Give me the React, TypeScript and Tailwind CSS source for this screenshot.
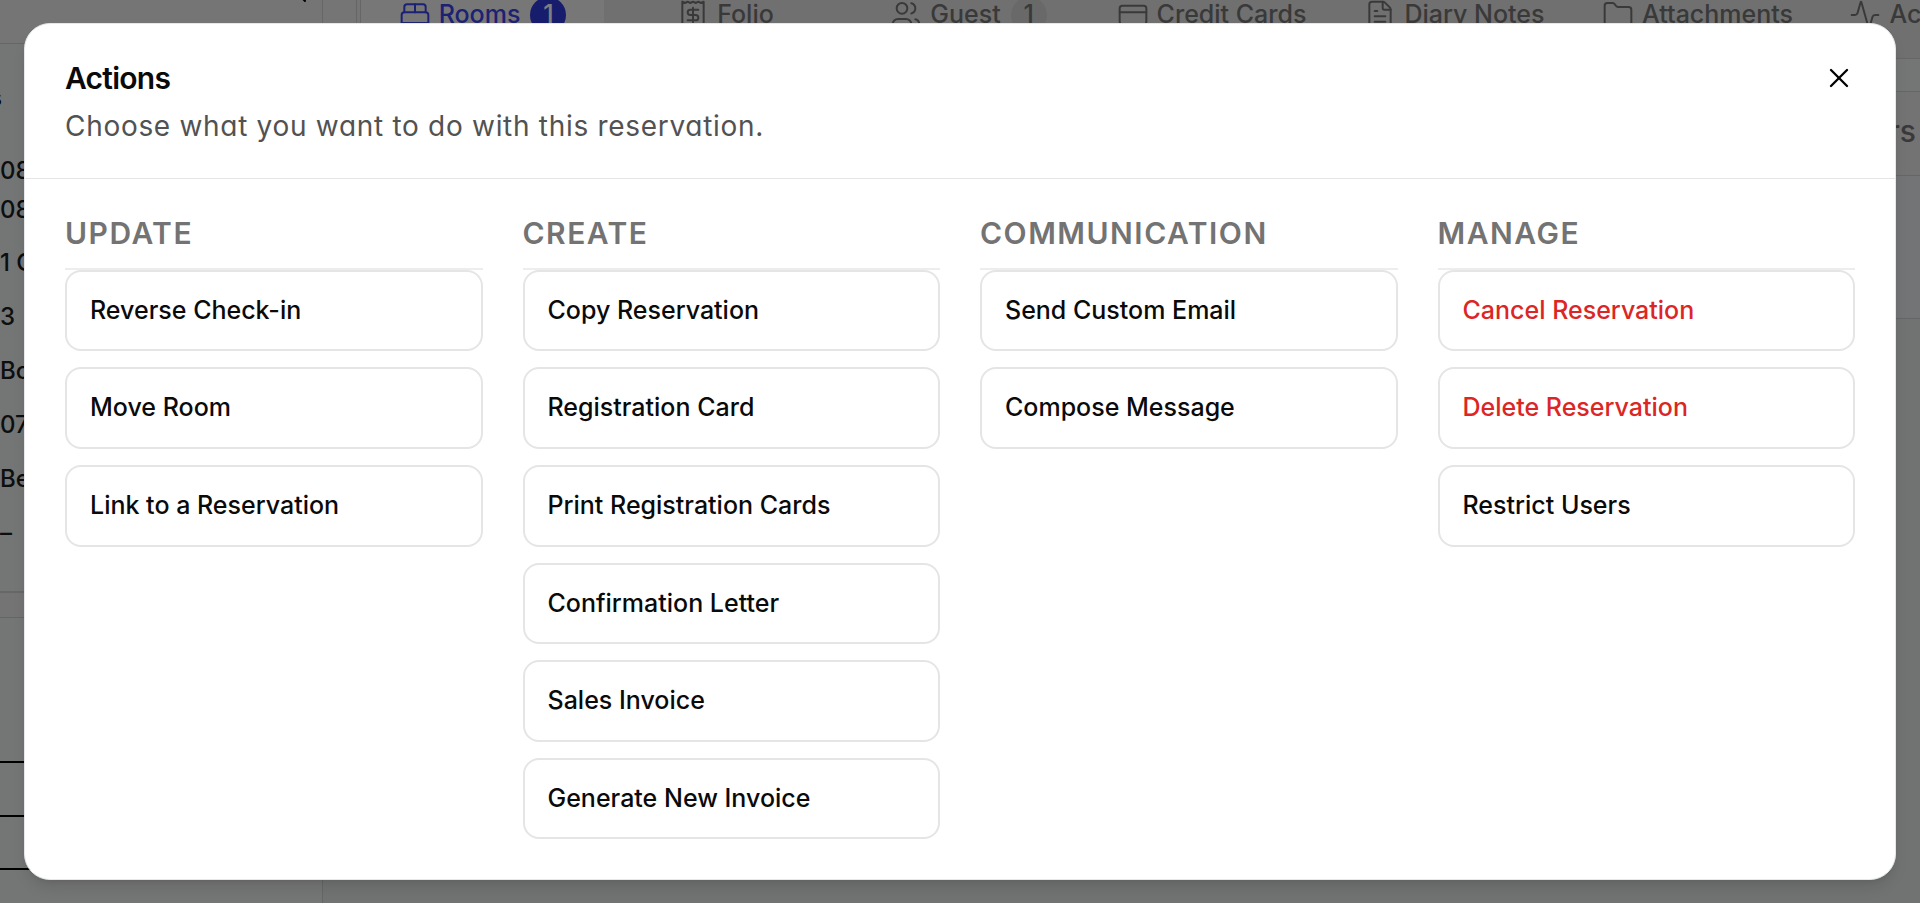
import clsx from "clsx";
import {
  Activity,
  BedDouble,
  CreditCard,
  FileText,
  Folder,
  Receipt,
  Search,
  Users,
  X,
} from "lucide-react";

const tabs = [
  { label: "Rooms", icon: BedDouble, count: 1, active: true },
  { label: "Folio", icon: Receipt },
  { label: "Guest", icon: Users, count: 1 },
  { label: "Credit Cards", icon: CreditCard },
  { label: "Diary Notes", icon: FileText },
  { label: "Attachments", icon: Folder },
  { label: "Activity Log", icon: Activity },
];

const details = ["1 C", "3", "Bo", "07", "Be", "–"];

const groups = [
  {
    title: "Update",
    actions: [
      { label: "Reverse Check-in" },
      { label: "Move Room" },
      { label: "Link to a Reservation" },
    ],
  },
  {
    title: "Create",
    actions: [
      { label: "Copy Reservation" },
      { label: "Registration Card" },
      { label: "Print Registration Cards" },
      { label: "Confirmation Letter" },
      { label: "Sales Invoice" },
      { label: "Generate New Invoice" },
    ],
  },
  {
    title: "Communication",
    actions: [{ label: "Send Custom Email" }, { label: "Compose Message" }],
  },
  {
    title: "Manage",
    actions: [
      { label: "Cancel Reservation", danger: true },
      { label: "Delete Reservation", danger: true },
      { label: "Restrict Users" },
    ],
  },
];

const Sidebar = () => {
  return (
    <aside className="flex w-[323px] shrink-0 flex-col border-r border-[#cccccc] text-2xl font-medium text-[#1a1d21]">
      <div className="flex h-11 shrink-0 justify-end border-b border-[#cccccc] bg-[#ebebeb] pr-3.5">
        <Search className="-mt-5 size-6 text-black" />
      </div>
      <div className="border-b-2 border-[#cccecc] pb-[31px]">
        <div className="flex h-[108px] w-0.5 items-center justify-end font-semibold text-black">
          Details
        </div>
        <p className="h-[38px] leading-[38px]">08</p>
        <p className="mb-1.5 h-10 leading-10">08</p>
        {details.map((item) => (
          <p key={item} className="h-[54px] leading-[54px]">
            {item}
          </p>
        ))}
      </div>
      <div className="h-6 shrink-0 bg-[#e6e8e6]"></div>
      <div className="flex-1 border-t border-[#cccccc]">
        <div className="h-[145px] border-b-2 border-black"></div>
        <div className="h-[54px] border-b-2 border-black"></div>
        <div className="h-[53px] border-b-2 border-black"></div>
      </div>
    </aside>
  );
};

const Reservation = () => {
  return (
    <div aria-hidden="true" className="flex h-full bg-[#e9eaeb]">
      <Sidebar />
      <main className="flex min-w-0 flex-1 flex-col">
        <div className="flex h-[59px] shrink-0 items-start overflow-hidden border-b border-[#cccccc] bg-[#ebebeb]">
          <div className="h-full w-[34px] shrink-0 border-r border-[#cccccc]"></div>
          <nav className="ml-[3px] flex h-full border-l border-[#cccccc] bg-[#e0e0e0]">
            {tabs.map(({ label, icon: Icon, count, active }) => (
              <a
                key={label}
                href="#"
                className={clsx(
                  "flex h-[30px] w-[243px] shrink-0 items-center justify-center gap-2 text-[25px] font-medium",
                  active ? "bg-[#efefef] text-[#3a42e6]" : "text-[#737373]"
                )}
              >
                <Icon className="size-8" strokeWidth={1.5} />
                {label}
                {count && (
                  <span
                    className={clsx(
                      "ml-0.5 flex size-9 items-center justify-center rounded-full",
                      active ? "bg-[#3038d8] text-white" : "bg-[#d2d2d2]"
                    )}
                  >
                    {count}
                  </span>
                )}
              </a>
            ))}
          </nav>
        </div>
        <div className="h-8 shrink-0"></div>
        <div className="flex h-[85px] shrink-0 items-center justify-end border-y border-[#cccccc] bg-[#e6e6e6] pr-1 pb-1.5 text-3xl font-medium text-[#737373]">
          Others
        </div>
        <div className="h-[143px] shrink-0 border-b border-[#cccccc] bg-[#e4e8ea]"></div>
        <div className="flex-1 bg-[#e2e4e4]"></div>
      </main>
    </div>
  );
};

const App = () => {
  return (
    <div className="relative h-screen overflow-hidden font-['Inter',sans-serif]">
      <Reservation />

      <div className="absolute inset-0 flex items-center justify-center bg-black/50 px-6">
        <div
          role="dialog"
          aria-labelledby="actions-title"
          className="flex h-[95vh] w-full flex-col rounded-[26px] border border-gray-200 bg-white shadow-lg"
        >
          <div className="flex items-start justify-between border-b border-[#e5e5e5] px-10 pt-9 pb-8">
            <div>
              <h2
                id="actions-title"
                className="text-3xl leading-9 font-semibold tracking-tight text-[#0a0a0a]"
              >
                Actions
              </h2>
              <p className="mt-2.5 text-[28px] leading-10 tracking-wide text-[#525252] [font-feature-settings:'cv11']">
                Choose what you want to do with this reservation.
              </p>
            </div>
            <button aria-label="Close" className="mt-0.5">
              <X className="size-8" strokeWidth={1.75} />
            </button>
          </div>

          <div className="grid flex-1 grid-cols-4 gap-10 px-10 pt-8 pb-10">
            {groups.map((group) => (
              <section key={group.title} className="flex flex-col">
                <h3 className="border-b-2 border-[#ededed] pb-[13px] text-3xl leading-[44px] font-semibold tracking-wider text-[#737373] uppercase">
                  {group.title}
                </h3>
                <div className="grid flex-1 grid-rows-6 gap-4">
                  {group.actions.map((action: any) => (
                    <button
                      key={action.label}
                      className={clsx(
                        "rounded-2xl border-2 border-[#e5e5e5] px-[23px] text-left text-[25px] font-medium",
                        action.danger ? "text-[#dc2626]" : "text-[#0a0a0a]"
                      )}
                    >
                      {action.label}
                    </button>
                  ))}
                </div>
              </section>
            ))}
          </div>
        </div>
      </div>
    </div>
  );
};

export default App;
